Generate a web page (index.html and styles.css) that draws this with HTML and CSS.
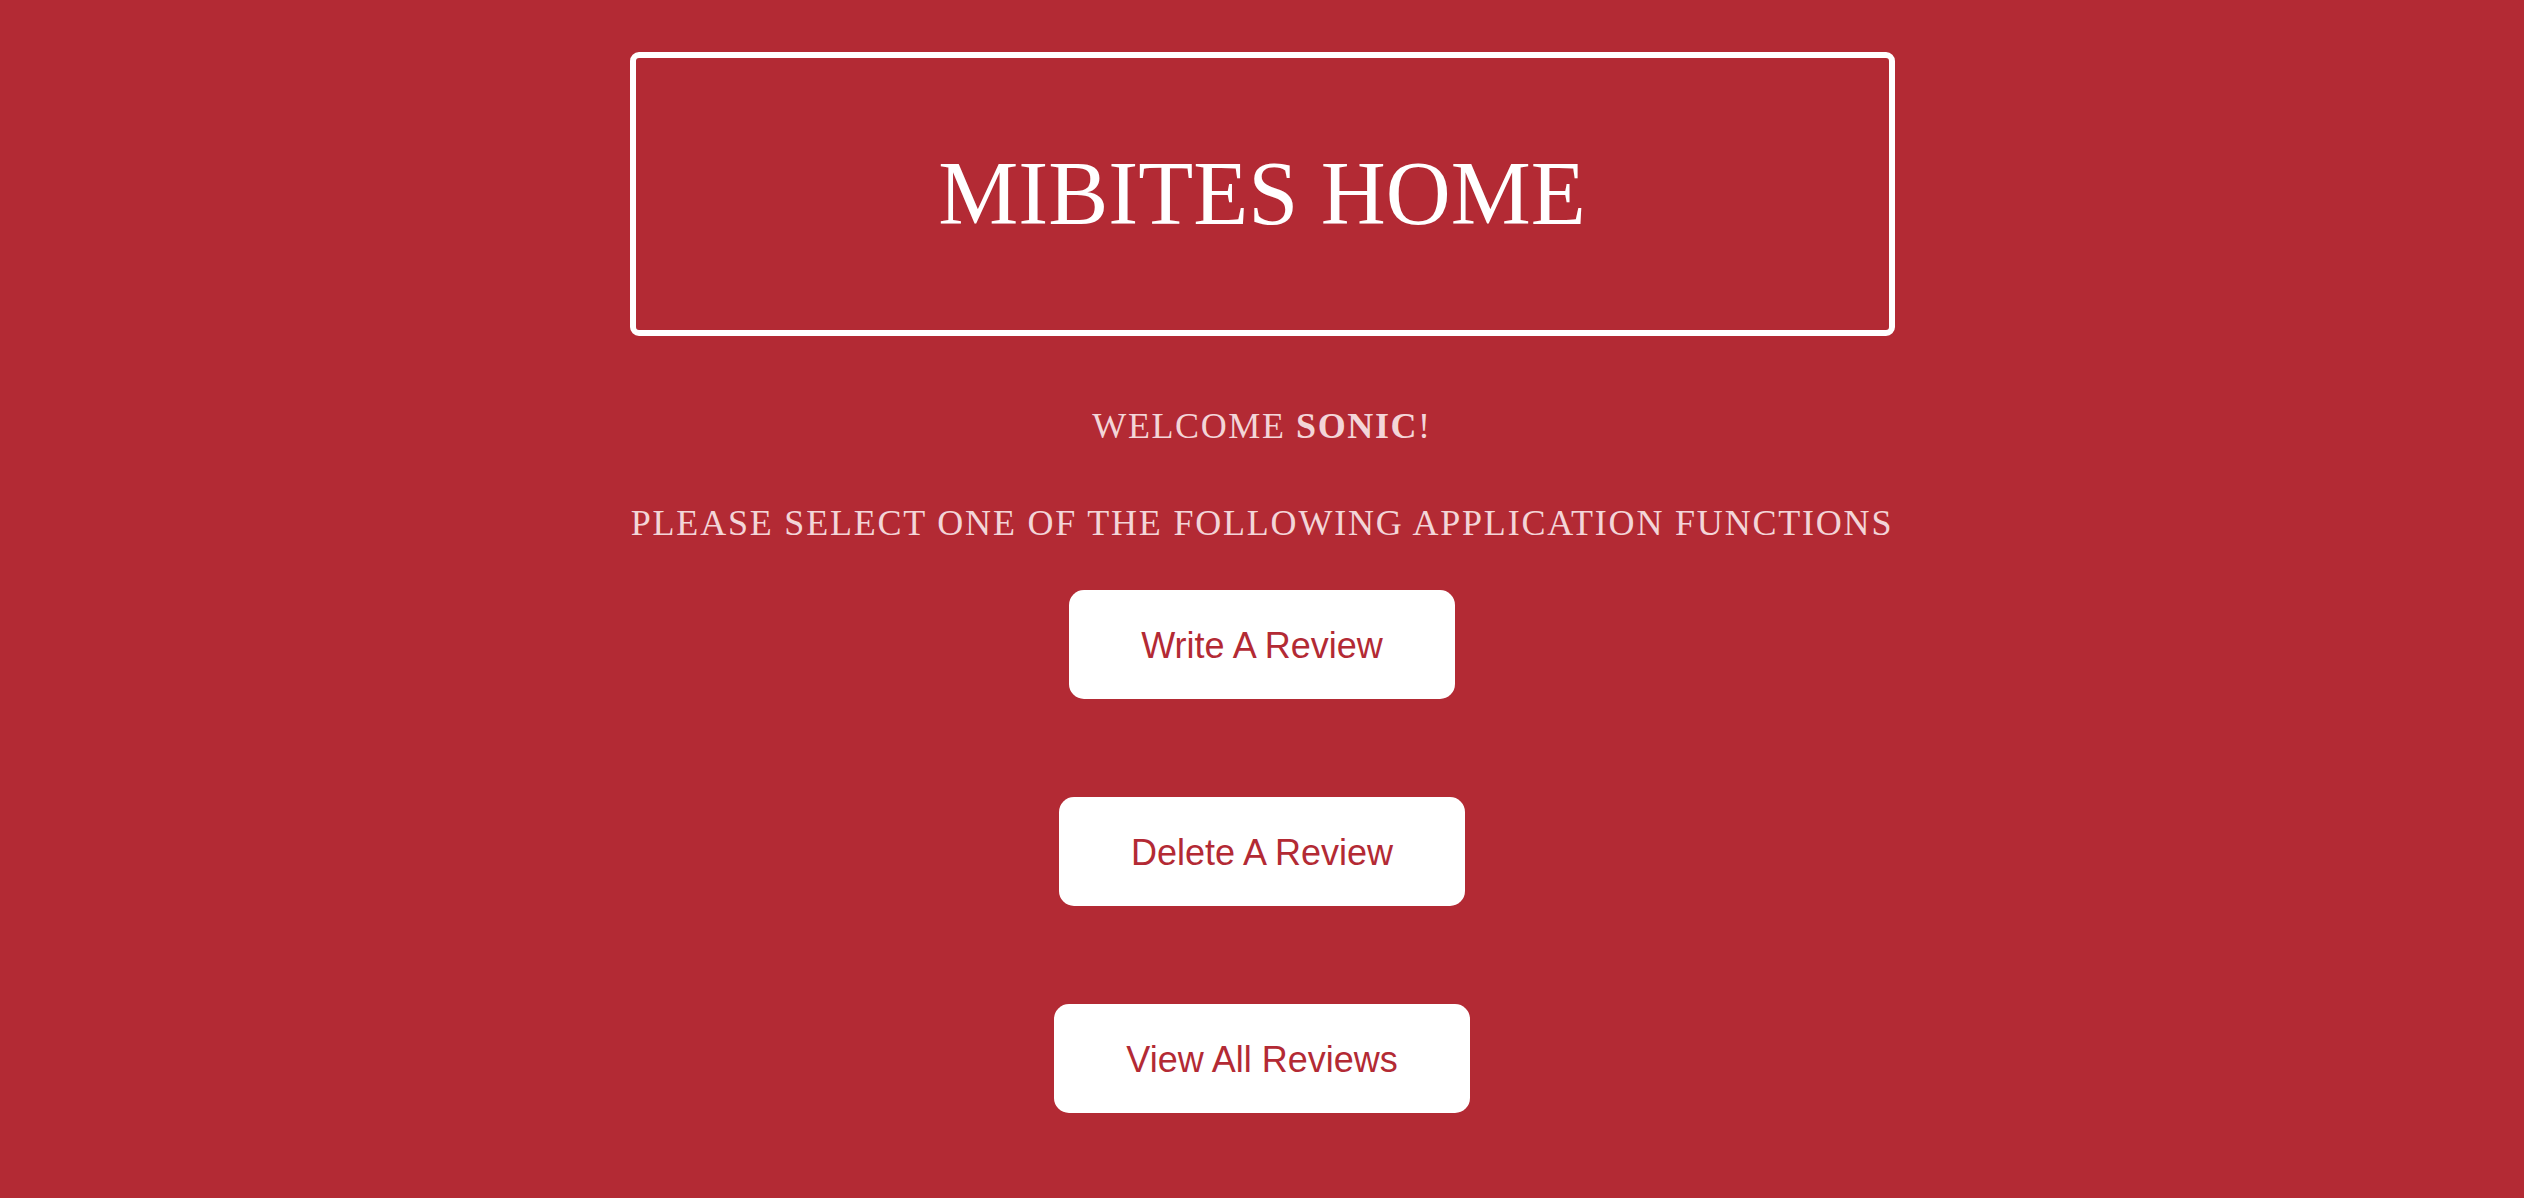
FILE: index.html
```html
<!DOCTYPE html>
<html lang="en">
<head>
<meta charset="utf-8">
<title>MIBITES HOME</title>
<link rel="stylesheet" href="styles.css">
</head>
<body>
<main class="page">
  <header class="title-box">
    <h1 class="title">MIBITES HOME</h1>
  </header>
  <p class="welcome">WELCOME <strong>SONIC</strong>!</p>
  <p class="prompt">PLEASE SELECT ONE OF THE FOLLOWING APPLICATION FUNCTIONS</p>
  <nav class="actions">
    <button class="action" type="button">Write A Review</button>
    <button class="action" type="button">Delete A Review</button>
    <button class="action" type="button">View All Reviews</button>
  </nav>
</main>
</body>
</html>
```

FILE: styles.css
```css
html, body {
  margin: 0;
  padding: 0;
  background: #b32a34;
  min-height: 100%;
}

body {
  height: 1198px;
  overflow: hidden;
}

.page {
  display: flex;
  flex-direction: column;
  align-items: center;
  padding-top: 52px;
  font-family: "Liberation Serif", "Times New Roman", serif;
}

.title-box {
  box-sizing: border-box;
  width: 1265px;
  height: 284px;
  border: 6px solid #ffffff;
  border-radius: 9px;
  display: flex;
  align-items: center;
  justify-content: center;
}

.title {
  margin: 0;
  font-family: "Liberation Serif", "Times New Roman", serif;
  font-weight: normal;
  font-size: 90px;
  line-height: 100px;
  color: #ffffff;
}

.welcome,
.prompt {
  margin: 0;
  font-size: 36px;
  line-height: 40px;
  letter-spacing: 1.6px;
  color: #f3d5d8;
  text-align: center;
}

.welcome {
  margin-top: 70px;
}

.welcome strong {
  font-weight: bold;
}

.prompt {
  margin-top: 57px;
  letter-spacing: 1.8px;
}

.actions {
  margin-top: 47px;
  display: flex;
  flex-direction: column;
  align-items: center;
  gap: 98px;
}

.action {
  box-sizing: border-box;
  height: 109px;
  padding: 2px 72px 0;
  border: none;
  border-radius: 15px;
  background: #ffffff;
  color: #b32a34;
  font-family: "Liberation Sans", Arial, sans-serif;
  font-size: 36px;
  line-height: normal;
  cursor: pointer;
}
```
